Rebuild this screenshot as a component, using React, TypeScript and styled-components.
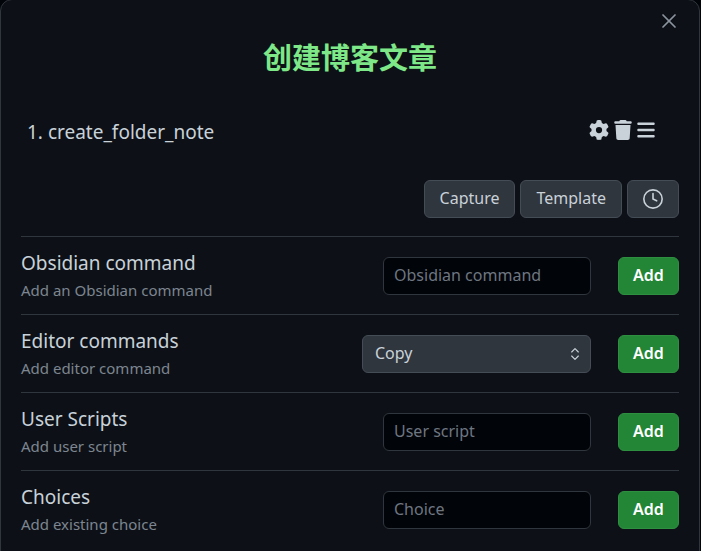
import React from "react";
import styled, { createGlobalStyle } from "styled-components";
import { FaBars, FaGear, FaTrash } from "react-icons/fa6";
import { ChevronsUpDown, Clock4, X } from "lucide-react";

const GlobalStyle = createGlobalStyle`
  *, *::before, *::after { box-sizing: border-box; }
  body {
    margin: 0;
    background: #010409;
    color: #c9d1d9;
    font-family: "Noto Sans", "Noto Sans CJK SC", sans-serif;
    overflow: hidden;
  }
  button, input, select { font: inherit; color: inherit; }
`;

const Modal = styled.main`
  position: relative;
  min-height: calc(100vh + 20px);
  margin: -1px 1px 0 0;
  padding: 36px 20px 20px;
  border: 1px solid #30363d;
  border-radius: 12px;
  background: #0d1117;
`;

const CloseButton = styled.button`
  position: absolute;
  top: 9px;
  right: 18px;
  display: flex;
  padding: 0;
  border: 0;
  background: none;
  color: #8b949e;
`;

const Title = styled.h2`
  margin: 0;
  color: #7ee787;
  font-size: 29px;
  font-weight: 700;
  line-height: 44px;
  text-align: center;
`;

const CommandList = styled.ol`
  display: flex;
  flex-direction: column;
  margin: 32px 0 0;
  padding: 0 24px 0 6px;
  list-style: none;
`;

const CommandItem = styled.li`
  display: flex;
  align-items: center;
  justify-content: space-between;
  font-size: 19px;
  line-height: 40px;
`;

const CommandActions = styled.div`
  display: flex;
  gap: 5px;
  padding-bottom: 4px;
`;

const IconButton = styled.button<{ $width: number }>`
  display: flex;
  justify-content: center;
  width: ${(p) => p.$width}px;
  padding: 0;
  border: 0;
  background: none;
  svg { flex: none; }
`;

const Button = styled.button<{ $primary?: boolean }>`
  display: flex;
  align-items: center;
  justify-content: center;
  height: 38px;
  padding: 0 14px 2px;
  border: 1px solid ${(p) => (p.$primary ? "#2f8f41" : "#444c56")};
  border-radius: 6px;
  background: ${(p) => (p.$primary ? "#238636" : "#30363d")};
  color: ${(p) => (p.$primary ? "#ffffff" : "#c9d1d9")};
  font-size: 16px;
  font-weight: ${(p) => (p.$primary ? 600 : 400)};
`;

const AddButton = styled(Button)`
  width: 61px;
  padding: 0 0 2px;
`;

const ToolButton = styled(Button)`
  padding: 0 15px 2px;
`;

const WaitButton = styled(Button)`
  width: 52px;
  padding: 0;
`;

const Toolbar = styled.div`
  display: flex;
  justify-content: flex-end;
  gap: 5px;
  margin: 28px 0 18px;
`;

const Setting = styled.section`
  display: flex;
  align-items: center;
  justify-content: space-between;
  height: 78px;
  border-top: 1px solid #30363d;
`;

const SettingName = styled.label`
  display: block;
  font-size: 19px;
  line-height: 28px;
`;

const SettingNote = styled.div`
  color: #7d8590;
  font-size: 15px;
  line-height: 26px;
`;

const Controls = styled.div`
  display: flex;
  align-items: center;
  gap: 27px;
`;

const TextInput = styled.input`
  width: 208px;
  height: 38px;
  padding: 0 10px 2px;
  border: 1px solid #30363d;
  border-radius: 6px;
  background: #010409;
  font-size: 16px;
  &::placeholder { color: #6e7681; opacity: 1; }
`;

const SelectBox = styled.div`
  position: relative;
  display: flex;
  align-items: center;
`;

const Select = styled.select`
  width: 229px;
  height: 38px;
  padding: 0 32px 2px 12px;
  border: 1px solid #444c56;
  border-radius: 6px;
  background: #30363d;
  font-size: 16px;
  appearance: none;
`;

const SelectArrow = styled(ChevronsUpDown)`
  position: absolute;
  right: 8px;
  pointer-events: none;
`;

type SettingRow = { id: string; name: string; note: string; placeholder?: string; options?: string[] };

const settings: SettingRow[] = [
  { id: "obsidian", name: "Obsidian command", note: "Add an Obsidian command", placeholder: "Obsidian command" },
  { id: "editor", name: "Editor commands", note: "Add editor command", options: ["Copy"] },
  { id: "script", name: "User Scripts", note: "Add user script", placeholder: "User script" },
  { id: "choice", name: "Choices", note: "Add existing choice", placeholder: "Choice" },
];

export default function App() {
  return (
    <>
      <GlobalStyle />
      <Modal>
        <CloseButton aria-label="Close"><X size={24} strokeWidth={1.75} /></CloseButton>
        <Title>创建博客文章</Title>
        <CommandList>
          <CommandItem>
            <span>1. create_folder_note</span>
            <CommandActions>
              <IconButton $width={20} aria-label="Configure"><FaGear size={20} /></IconButton>
              <IconButton $width={18} aria-label="Delete"><FaTrash size={20} /></IconButton>
              <IconButton $width={18} aria-label="Reorder"><FaBars size={20} /></IconButton>
            </CommandActions>
          </CommandItem>
        </CommandList>
        <Toolbar>
          <ToolButton>Capture</ToolButton>
          <ToolButton>Template</ToolButton>
          <WaitButton aria-label="Wait"><Clock4 size={22} strokeWidth={1.75} /></WaitButton>
        </Toolbar>
        {settings.map((s) => (
          <Setting key={s.id}>
            <div>
              <SettingName htmlFor={s.id}>{s.name}</SettingName>
              <SettingNote>{s.note}</SettingNote>
            </div>
            <Controls>
              {s.options ? (
                <SelectBox>
                  <Select id={s.id}>{s.options.map((o) => <option key={o}>{o}</option>)}</Select>
                  <SelectArrow size={16} strokeWidth={1.75} />
                </SelectBox>
              ) : (
                <TextInput id={s.id} type="text" placeholder={s.placeholder} />
              )}
              <AddButton $primary>Add</AddButton>
            </Controls>
          </Setting>
        ))}
      </Modal>
    </>
  );
}
